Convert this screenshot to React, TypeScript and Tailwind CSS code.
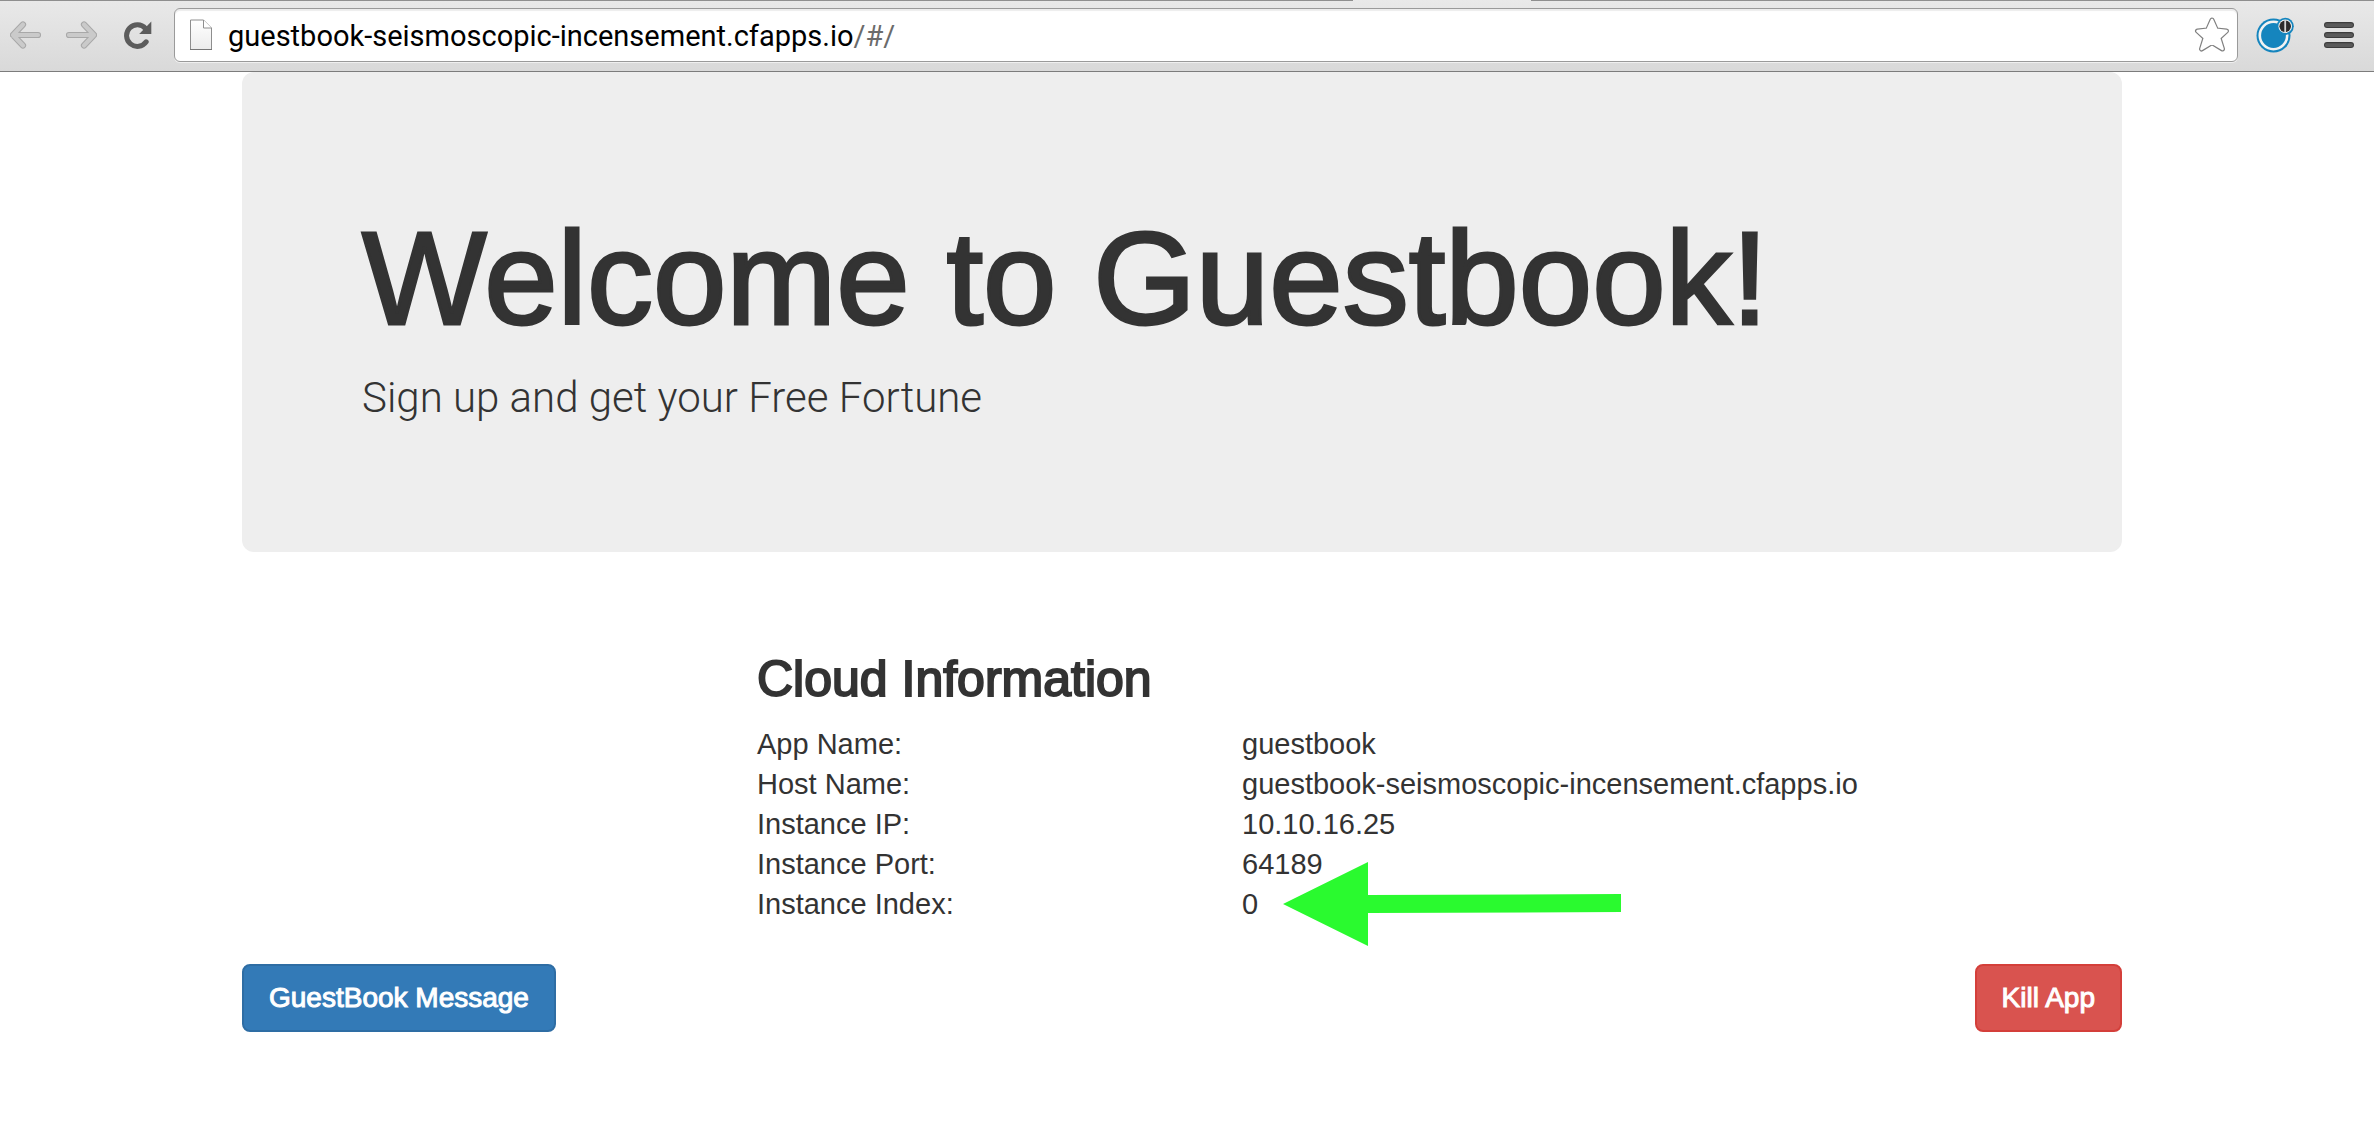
const info = [
  { label: "App Name:", value: "guestbook" },
  { label: "Host Name:", value: "guestbook-seismoscopic-incensement.cfapps.io" },
  { label: "Instance IP:", value: "10.10.16.25" },
  { label: "Instance Port:", value: "64189" },
  { label: "Instance Index:", value: "0", highlighted: true },
];

const arrow = "M3 14 13 3.5M3 14 13 24.500M3 14H28";

function BackIcon({ className = "" }: { className?: string }) {
  return (
    <svg viewBox="0 0 32 28" className={"h-7 w-8 " + className} fill="none" strokeLinecap="round" strokeLinejoin="round" aria-hidden="true">
      <path d={arrow} stroke="#a8a8a8" strokeWidth="6.2" />
      <path d={arrow} stroke="#cacaca" strokeWidth="4.2" />
    </svg>
  );
}

function ReloadIcon() {
  return (
    <svg viewBox="0 0 28 28" className="size-7" fill="none" aria-hidden="true">
      <path d="M21.500 7.500A10.800 10.800 0 1 0 22.200 20.800" stroke="#5c5c5c" strokeWidth="5" strokeLinecap="round" />
      <path d="M27.300 0.500V13H15.200z" fill="#5c5c5c" />
    </svg>
  );
}

function PageIcon() {
  return (
    <svg viewBox="0 0 24 32" className="h-8 w-6 shrink-0" aria-hidden="true">
      <defs>
        <linearGradient id="sheet" x1="0" y1="0" x2="0" y2="1">
          <stop offset="0" stopColor="#fff" />
          <stop offset="1" stopColor="#ececec" />
        </linearGradient>
      </defs>
      <path d="M1.500 1H14.500L22.500 9V30.500H1.500z" fill="url(#sheet)" stroke="#8e8e8e" />
      <path d="M14.500 1V9H22.500" fill="#fff" stroke="#8e8e8e" />
      <path d="M1 30.500H23" stroke="#777" />
    </svg>
  );
}

function StarIcon() {
  const points = "18,3 22.4,12.900 32.500,14 25,20.800 28.500,32 18,25.700 7.500,32 11,20.800 3.500,14 13.600,12.900";
  return (
    <svg viewBox="0 0 36 36" className="size-9" strokeLinejoin="round" aria-hidden="true">
      <polygon points={points} fill="#808080" stroke="#808080" strokeWidth="5" />
      <polygon points={points} fill="#fff" stroke="#fff" strokeWidth="2.6" />
    </svg>
  );
}

function ExtensionIcon() {
  return (
    <svg viewBox="0 0 38 36" className="h-9 w-[38px]" aria-hidden="true">
      <circle cx="17.500" cy="18.500" r="17" fill="#1585be" />
      <circle cx="17.500" cy="18.500" r="13.700" fill="#1585be" stroke="#f2f2f2" strokeWidth="2.600" />
      <circle cx="29.200" cy="9.300" r="8.600" fill="#1585be" />
      <circle cx="29.200" cy="9.300" r="6.800" fill="#f2f2f2" />
      <circle cx="29.200" cy="9.300" r="5.800" fill="#2d2b2b" />
      <path d="M29.200 3V15.600" stroke="#d5d5d5" strokeWidth="1.800" />
    </svg>
  );
}

function MenuIcon() {
  return (
    <svg viewBox="0 0 30 28" className="h-7 w-[30px]" aria-hidden="true">
      {[1, 11, 21].map((y) => (
        <g key={y}>
          <rect x="0" y={y} width="30" height="6" rx="3" fill="#3c3c3c" />
          <rect x="1" y={y + 1.2} width="28" height="3.800" rx="1.900" fill="#5a5a5a" />
        </g>
      ))}
    </svg>
  );
}

function Toolbar() {
  return (
    <header className="bg-linear-to-b from-[#e9e9e9] to-[#d9d9d9] border-b border-[#7c7c7c]">
      <div className="flex h-px">
        <span className="w-[57%] bg-[#8f8f8f]" />
        <span className="w-[178px]" />
        <span className="flex-1 bg-[#8f8f8f]" />
      </div>
      <div className="flex items-center pt-[7px] pb-[9px] pl-[10px] pr-5">
        <button type="button" aria-label="Back"><BackIcon /></button>
        <button type="button" aria-label="Forward" className="ml-[23px]"><BackIcon className="-scale-x-100" /></button>
        <button type="button" aria-label="Reload" className="ml-[27px]"><ReloadIcon /></button>
        <div className="ml-[22px] flex h-[54px] flex-1 items-center rounded-md border border-[#9a9a9a] bg-white pl-[14px] pr-[7px] shadow-[inset_0_2px_1px_#ededed,0_1px_0_#f0f0f0]">
          <PageIcon />
          <p className="ml-[15px] flex-1 pt-0.5 font-[Roboto,sans-serif] text-[29px] leading-9 text-black">
            guestbook-seismoscopic-incensement.cfapps.io<span className="text-[#6b6b6b]">/#/</span>
          </p>
          <button type="button" aria-label="Bookmark this page"><StarIcon /></button>
        </div>
        <button type="button" aria-label="Extension" className="ml-[18px]"><ExtensionIcon /></button>
        <button type="button" aria-label="Menu" className="ml-[30px]"><MenuIcon /></button>
      </div>
    </header>
  );
}

function PointerArrow() {
  return (
    <svg viewBox="0 0 338 86" className="absolute -top-[23px] left-[41px] h-[86px] w-[338px]" aria-hidden="true">
      <path d="M0 43 85 1V34L338 33V51L85 52V85z" fill="#2afa2f" />
    </svg>
  );
}

export default function App() {
  return (
    <div className="min-h-screen bg-white font-['Liberation_Sans',Arial,sans-serif] text-[#333]">
      <Toolbar />
      <div className="pr-[10px]">
        <main className="mx-auto max-w-[1940px] px-[30px]">
          <section className="rounded-xl bg-[#eee] px-[120px] pt-[137px] pb-[124px]">
            <h1 className="text-[132px] leading-[139px] [-webkit-text-stroke:3px_#333]">Welcome to Guestbook!</h1>
            <p className="mt-5 font-[Roboto,sans-serif] text-[42px] leading-[60px] font-light">Sign up and get your Free Fortune</p>
          </section>

          <section className="mt-[100px] grid grid-cols-[515fr_1365fr]">
            <h2 className="col-start-2 text-[50px] leading-[55px] [-webkit-text-stroke:2px_#333]">Cloud Information</h2>
            <dl className="col-start-2 mt-[17px] text-[29px] leading-10">
              {info.map((row) => (
                <div key={row.label} className="grid grid-cols-[485fr_880fr]">
                  <dt>{row.label}</dt>
                  <dd className="relative">
                    {row.value}
                    {row.highlighted && <PointerArrow />}
                  </dd>
                </div>
              ))}
            </dl>
          </section>

          <div className="mt-10 flex justify-between text-[28px] leading-10 text-white [-webkit-text-stroke:1px_#fff]">
            <button type="button" className="rounded-lg border-2 border-[#2e6da4] bg-[#337ab7] px-[25px] py-3">GuestBook Message</button>
            <button type="button" className="rounded-lg border-2 border-[#d43f3a] bg-[#d9534f] px-[25px] py-3">Kill App</button>
          </div>
        </main>
      </div>
    </div>
  );
}
